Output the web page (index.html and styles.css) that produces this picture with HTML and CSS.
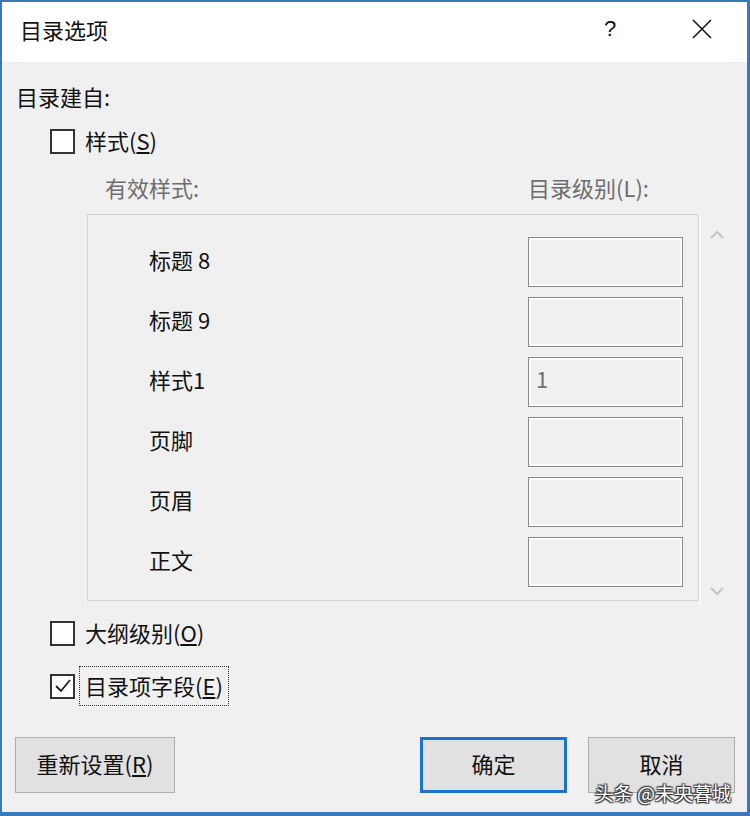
FILE: index.html
```html
<!DOCTYPE html>
<html lang="zh-CN">
<head>
    <meta charset="UTF-8">
    <title>目录选项</title>
    <link rel="stylesheet" href="styles.css">
</head>
<body>
    <div class="dialog">
        <div class="titlebar">
            <span class="title">目录选项</span>
            <span class="help">?</span>
            <svg class="close" width="22" height="22" viewBox="0 0 22 22">
                <path d="M2 2 L20 20 M20 2 L2 20" stroke="#1a1a1a" stroke-width="1.6" fill="none"/>
            </svg>
        </div>

        <div class="content">
            <div class="section-label">目录建自:</div>

            <div class="check-row first">
                <span class="checkbox"></span>
                <span class="check-text">样式(<u>S</u>)</span>
            </div>

            <div class="list-head">
                <span class="head-left">有效样式:</span>
                <span class="head-right">目录级别(L):</span>
            </div>

            <div class="list-wrap">
                <div class="list-box">
                    <div class="list-row"><span class="style-name">标题 8</span><span class="level"></span></div>
                    <div class="list-row"><span class="style-name">标题 9</span><span class="level"></span></div>
                    <div class="list-row"><span class="style-name">样式1</span><span class="level">1</span></div>
                    <div class="list-row"><span class="style-name">页脚</span><span class="level"></span></div>
                    <div class="list-row"><span class="style-name">页眉</span><span class="level"></span></div>
                    <div class="list-row"><span class="style-name">正文</span><span class="level"></span></div>
                </div>
                <div class="scroll">
                    <svg width="14" height="9" viewBox="0 0 14 9"><path d="M1 8 L7 2 L13 8" stroke="#c4c4c4" stroke-width="2" fill="none"/></svg>
                    <svg width="14" height="9" viewBox="0 0 14 9"><path d="M1 1 L7 7 L13 1" stroke="#c4c4c4" stroke-width="2" fill="none"/></svg>
                </div>
            </div>

            <div class="check-row outline">
                <span class="checkbox"></span>
                <span class="check-text">大纲级别(<u>O</u>)</span>
            </div>

            <div class="check-row field">
                <span class="checkbox checked">
                    <svg width="20" height="20" viewBox="0 0 20 20"><path d="M3 10 L8 15 L17 4" stroke="#1a1a1a" stroke-width="1.8" fill="none"/></svg>
                </span>
                <span class="check-text focus">目录项字段(<u>E</u>)</span>
            </div>
        </div>

        <div class="buttons">
            <button class="btn">重新设置(<u>R</u>)</button>
            <div class="spacer"></div>
            <button class="btn default">确定</button>
            <button class="btn">取消</button>
        </div>

        <span class="watermark">头条 @未央暮城</span>
    </div>
</body>
</html>
```

FILE: styles.css
```css
* {
    box-sizing: border-box;
}

body {
    margin: 0;
    padding: 0;
    font-family: "Noto Sans CJK SC", "Noto Sans", sans-serif;
    color: #111;
}

.dialog {
    position: relative;
    width: 750px;
    height: 816px;
    background-color: #f0f0f0;
    border: 2px solid #3a78b8;
    border-right-width: 3px;
    border-bottom-width: 4px;
    display: flex;
    flex-direction: column;
}

.titlebar {
    height: 60px;
    background-color: #fff;
    display: flex;
    align-items: center;
    padding: 0 0 6px 18px;
    flex-shrink: 0;
}

.title {
    font-size: 22px;
    line-height: 28px;
    flex: 1;
}

.help {
    font-family: "Liberation Sans", sans-serif;
    font-size: 22px;
    width: 22px;
    text-align: center;
    margin-right: 70px;
}

.close {
    margin-right: 34px;
}

.content {
    padding: 20px 0 0 14px;
    font-size: 22px;
}

.section-label {
    line-height: 28px;
}

.check-row {
    display: flex;
    align-items: center;
    margin-left: 34px;
    height: 28px;
}

.check-row.first {
    margin-top: 17px;
}

.checkbox {
    width: 25px;
    height: 25px;
    border: 2px solid #333;
    background-color: #fff;
    display: flex;
    align-items: center;
    justify-content: center;
    flex-shrink: 0;
}

.check-text {
    margin-left: 10px;
    line-height: 28px;
    padding-bottom: 3px;
    white-space: nowrap;
}

.list-head {
    display: flex;
    margin-top: 18px;
    line-height: 28px;
    color: #6d6d6d;
}

.head-left {
    margin-left: 89px;
    width: 423px;
}

.list-wrap {
    display: flex;
    margin-top: 13px;
    margin-left: 71px;
}

.list-box {
    width: 612px;
    height: 387px;
    border: 1px solid #d2d2d2;
    padding: 22px 0 0 61px;
    display: flex;
    flex-direction: column;
    gap: 10px;
}

.list-row {
    display: flex;
    align-items: center;
    height: 50px;
}

.style-name {
    width: 379px;
    line-height: 28px;
    padding-bottom: 6px;
}

.level {
    width: 155px;
    height: 50px;
    border: 1px solid #8c8c8c;
    box-shadow: inset 0 0 0 2px #fbfbfb;
    background-color: #f1f1f1;
    color: #707070;
    padding: 6px 0 0 7px;
    line-height: 28px;
}

.scroll {
    width: 34px;
    height: 390px;
    border-left: 2px solid #fafafa;
    display: flex;
    flex-direction: column;
    justify-content: space-between;
    align-items: center;
    padding: 16px 0 8px;
}

.check-row.outline {
    margin-top: 15px;
}

.check-row.field {
    margin-top: 19px;
    height: 40px;
}

.check-text.focus {
    margin-left: 4px;
    border: 1px dotted #333;
    padding: 4px 5px 6px 5px;
}

.buttons {
    display: flex;
    align-items: center;
    margin-top: 31px;
    padding: 0 12px 0 13px;
    gap: 21px;
}

.spacer {
    flex: 1;
}

.btn {
    font-family: "Noto Sans CJK SC", "Noto Sans", sans-serif;
    font-size: 22px;
    color: #111;
    height: 56px;
    width: 147px;
    background-color: #e1e1e1;
    border: 1px solid #adadad;
    padding: 0 0 4px;
}

.btn:first-child {
    width: 160px;
}

.btn.default {
    border: 3px solid #1a73c9;
}

.watermark {
    position: absolute;
    right: 16px;
    bottom: 7px;
    font-size: 19px;
    line-height: 24px;
    color: #fff;
    text-shadow: 1px 1px 1px #333, -1px -1px 1px #333, 1px -1px 1px #333, -1px 1px 1px #333;
}
```
